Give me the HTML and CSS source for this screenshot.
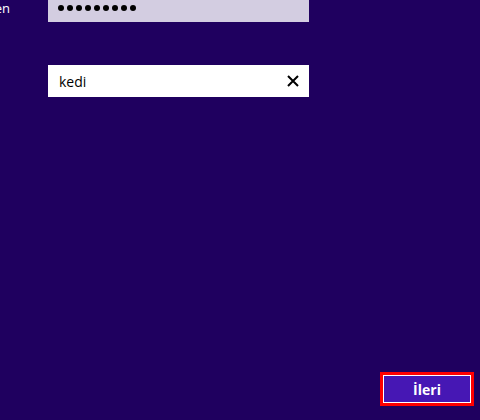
FILE: index.html
```html
<!DOCTYPE html>
<html lang="tr">
<head>
    <meta charset="UTF-8">
    <title>Parola oluştur</title>
    <link rel="stylesheet" href="styles.css">
</head>
<body>
    <div class="page">
        <div class="form">
            <!-- Parola tekrar -->
            <div class="form-row">
                <div class="label"><span>Parolayı yeniden</span></div>
                <div class="field field-disabled">
                    <div class="dots">
                        <span></span><span></span><span></span><span></span><span></span>
                        <span></span><span></span><span></span><span></span>
                    </div>
                </div>
            </div>

            <!-- Parola ipucu -->
            <div class="form-row">
                <div class="label"></div>
                <div class="field">
                    <span class="field-text">kedi</span>
                    <span class="clear-btn">
                        <svg width="12" height="12" viewBox="0 0 12 12">
                            <path d="M1 1 L11 11 M11 1 L1 11" stroke="#000" stroke-width="2" fill="none"/>
                        </svg>
                    </span>
                </div>
            </div>
        </div>

        <div class="footer">
            <button class="next-btn">İleri</button>
        </div>
    </div>
</body>
</html>
```

FILE: styles.css
```css
html, body {
    height: 100%;
}

body {
    margin: 0;
    background: #1f005f;
    font-family: 'Open Sans', 'Noto Sans', sans-serif;
    color: #fff;
    overflow: hidden;
}

.page {
    height: 100%;
    display: flex;
    flex-direction: column;
}

.form {
    margin-top: -10px;
    display: flex;
    flex-direction: column;
    gap: 43px;
}

.form-row {
    display: grid;
    grid-template-columns: 48px 261px;
    height: 32px;
}

.label {
    display: flex;
    justify-content: flex-end;
    padding: 11px 38px 0 0;
    overflow: hidden;
    white-space: nowrap;
    font-size: 13px;
    line-height: 14px;
}

.label span {
    flex-shrink: 0;
}

.field {
    background: #fff;
    display: flex;
    align-items: center;
    padding: 0 10px;
    color: #000;
}

.field-disabled {
    background: #d3cde1;
}

.dots {
    display: flex;
    gap: 3px;
    margin-top: 4px;
}

.dots span {
    width: 6px;
    height: 6px;
    border-radius: 50%;
    background: #000;
}

.field-text {
    flex: 1;
    font-size: 14px;
    padding-left: 1px;
}

.clear-btn {
    display: flex;
    align-items: center;
    height: 12px;
}

.footer {
    margin-top: auto;
    display: flex;
    justify-content: flex-end;
    padding: 0 6px 14px 0;
}

.next-btn {
    width: 94px;
    height: 34px;
    border: 3px solid #ff0000;
    box-shadow: inset 0 0 0 1px #fff;
    background: #4617b4;
    color: #fff;
    font-family: 'Open Sans', 'Noto Sans', sans-serif;
    font-size: 14px;
    font-weight: 700;
    padding: 0;
}
```
